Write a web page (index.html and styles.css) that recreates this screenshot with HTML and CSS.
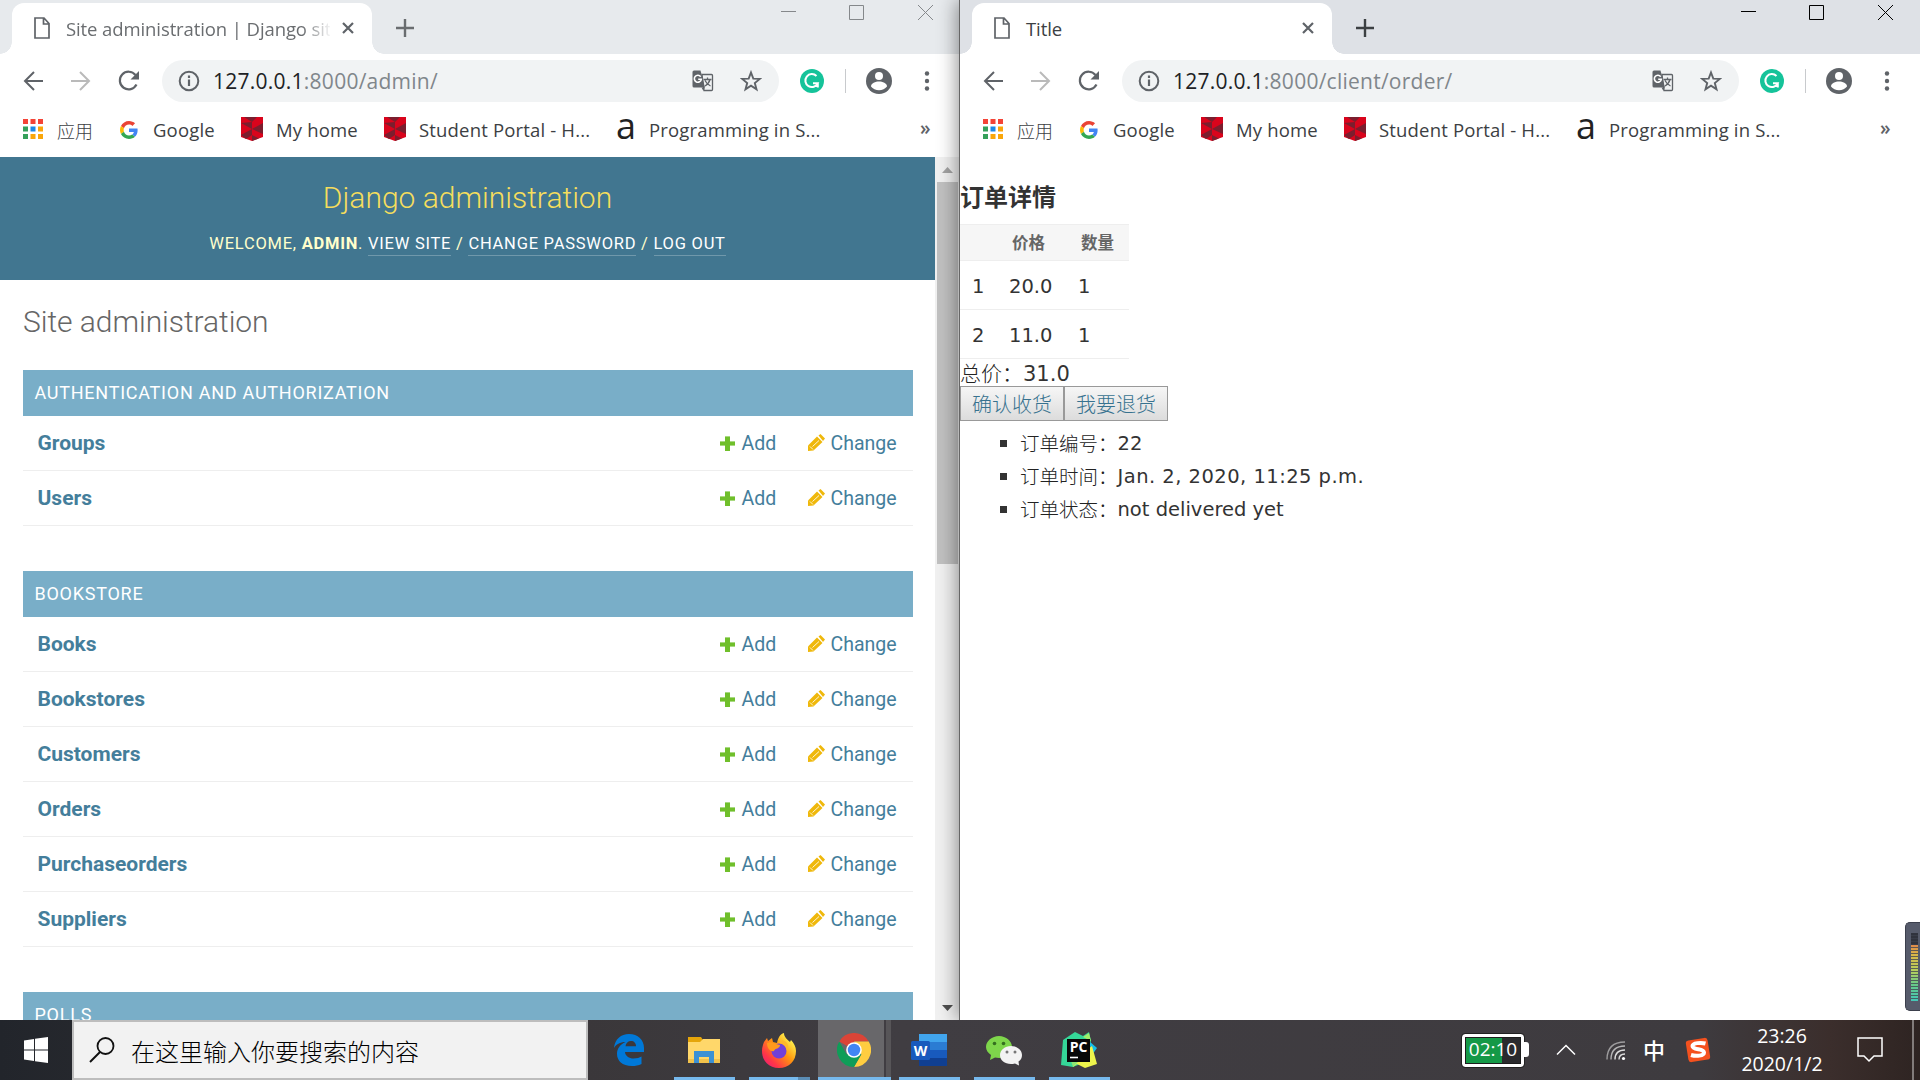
FILE: index.html
```html
<!DOCTYPE html>
<html lang="zh-CN">
<head>
<meta charset="utf-8">
<title>Desktop</title>
<link rel="stylesheet" href="styles.css">
</head>
<body>
<svg class="sprite" width="0" height="0" aria-hidden="true">
  <defs>
    <symbol id="page" viewBox="0 0 16 22"><path d="M1 1h9l5 5.500v14.500H1zM9.500 1v6H15" fill="none" stroke="#5f6368" stroke-width="1.700"/></symbol>
    <symbol id="cross" viewBox="0 0 12 12"><path d="M1 1l10 10M11 1L1 11" fill="none" stroke="currentColor" stroke-width="2.200"/></symbol>
    <symbol id="plus" viewBox="0 0 18 18"><path d="M9 0v18M0 9h18" fill="none" stroke="currentColor" stroke-width="2.400"/></symbol>
    <symbol id="back" viewBox="0 0 20 20"><path d="M20 10H2M11 1L2 10l9 9" fill="none" stroke="currentColor" stroke-width="2"/></symbol>
    <symbol id="reload" viewBox="0 0 22 22"><path d="M18.500 14.500A8.800 8.800 0 1 1 17.500 5" fill="none" stroke="#5f6368" stroke-width="2.200"/><path d="M21 1v8.500h-8.500z" fill="#5f6368"/></symbol>
    <symbol id="info" viewBox="0 0 22 22"><circle cx="11" cy="11" r="9.300" fill="none" stroke="#5f6368" stroke-width="2"/><path d="M11 9.500V16M11 5.500V8" stroke="#5f6368" stroke-width="2.200"/></symbol>
    <symbol id="translate" viewBox="0 0 22 22"><path d="M10 4.500h9.500q1 0 1 1V19.500q0 1-1 1H12z" fill="#f1f3f4" stroke="#5f6368" stroke-width="1.300"/><path d="M2 .5h6.500L13 17.500H2Q.5 17.500.5 16V2Q.5.500 2 .5z" fill="#5f6368"/><path d="M9.500 17.500h3.500l-1.800 3z" fill="#5f6368"/><path d="M8.700 6.700A3.500 3.500 0 1 0 9.300 9.300H6.200" fill="none" stroke="#fff" stroke-width="1.600"/><path d="M11.500 9.500h8M15.500 7.500v2M18 9.500q-1 4-5 6.500M13 10.500q2 4 5.500 5.500" fill="none" stroke="#5f6368" stroke-width="1.300"/></symbol>
    <symbol id="star" viewBox="0 0 22 22"><path d="M11 2.500l2.300 6.100 6.500.3-5 4.100 1.700 6.300L11 15.700l-5.500 3.600 1.700-6.300-5-4.100 6.500-.3z" fill="none" stroke="#5f6368" stroke-width="1.900"/></symbol>
    <symbol id="grammar" viewBox="0 0 24 24"><circle cx="12" cy="12" r="12" fill="#15c39a"/><path d="M16.500 7A6.500 6.500 0 1 0 17.800 14.200H13M17.800 18.500v-4.300" fill="none" stroke="#fff" stroke-width="2"/></symbol>
    <symbol id="user" viewBox="0 0 26 26"><circle cx="13" cy="13" r="13" fill="#5f6368"/><circle cx="13" cy="8" r="4" fill="#fff"/><path d="M5 18.500c0-3.300 4.500-5 8-5s8 1.700 8 5c-1.800 2.300-4.700 3.700-8 3.700s-6.200-1.400-8-3.700z" fill="#fff"/></symbol>
    <symbol id="dots" viewBox="0 0 6 20"><circle cx="3" cy="2.500" r="2.200"/><circle cx="3" cy="10" r="2.200"/><circle cx="3" cy="17.500" r="2.200"/></symbol>
    <symbol id="apps" viewBox="0 0 20 20"><path d="M0 0h5v5H0zM7.500 0h5v5h-5zM15 0h5v5h-5z" fill="#f44336"/><path d="M0 7.500h5v5H0zM0 15h5v5H0z" fill="#34a05a"/><path d="M7.500 7.500h5v5h-5z" fill="#1e88e5"/><path d="M15 7.500h5v5h-5zM7.500 15h5v5h-5zM15 15h5v5h-5z" fill="#f9a60a"/></symbol>
    <symbol id="google" viewBox="0 0 48 48"><path fill="#ea4335" d="M24 9.500c3.540 0 6.710 1.220 9.210 3.600l6.850-6.850C35.900 2.380 30.470 0 24 0 14.620 0 6.510 5.380 2.560 13.220l7.980 6.190C12.430 13.720 17.740 9.500 24 9.500z"/><path fill="#4285f4" d="M46.980 24.550c0-1.570-.15-3.090-.38-4.550H24v9.020h12.940c-.58 2.960-2.260 5.480-4.780 7.180l7.730 6c4.510-4.180 7.090-10.360 7.090-17.650z"/><path fill="#fbbc05" d="M10.530 28.590c-.48-1.450-.76-2.990-.76-4.590s.27-3.140.76-4.590l-7.980-6.190C.92 16.460 0 20.120 0 24c0 3.880.92 7.540 2.560 10.780l7.970-6.190z"/><path fill="#34a853" d="M24 48c6.480 0 11.930-2.130 15.890-5.810l-7.730-6c-2.150 1.450-4.920 2.300-8.160 2.300-6.260 0-11.570-4.220-13.470-9.910l-7.980 6.190C6.510 42.620 14.620 48 24 48z"/></symbol>
    <symbol id="shield" viewBox="0 0 22 24"><path d="M0 0h22v20l-11 4-11-4z" fill="#d9041c"/><path d="M3 0h13l-5 5zM11 5v7L0 6zM22 6v11l-11-5zM0 18l11-6v6l-6 4zM11 18l7 3.500-7 2.500z" fill="#7b1e2e"/></symbol>
    <symbol id="add" viewBox="0 0 15 15"><path d="M5 0h5v5h5v5h-5v5H5v-5H0V5h5z" fill="#70bf2b"/><path d="M5 0h5v1H5zM0 5h5v1H0zM10 5h5v1h-5zM0 9h5v1H0zM10 9h5v1h-5z" fill="#a8d981"/></symbol>
    <symbol id="pencil" viewBox="0 0 17 17"><path d="M0 17v-5.500L9 2.500l5.500 5.500-9 8.500z" fill="#efb80b"/><path d="M10.500 1.500L12.500 0l4.500 4.500-2 2.500z" fill="#efb80b"/><path d="M4.500 12.500L11 6.500M2 12.500l3 3" stroke="#fff6d5" stroke-width="1"/></symbol>
  </defs>
</svg>

<div class="desktop">
  <section class="window inactive">
    <header class="tabs">
      <div class="tab">
        <svg class="i-page"><use href="#page"/></svg>
        <span class="tab-title faded">Site administration | Django sit</span>
        <svg class="i-cross"><use href="#cross"/></svg>
      </div>
      <svg class="i-plus"><use href="#plus"/></svg>
      <svg class="controls" width="152" height="16"><path d="M0 6.500h15M68.500.5h14v14h-14zM137 0l15 15M152 0l-15 15" fill="none" stroke="currentColor"/></svg>
    </header>
    <div class="toolbar">
      <svg class="i-nav"><use href="#back"/></svg>
      <svg class="i-nav forward"><use href="#back"/></svg>
      <svg class="i-reload"><use href="#reload"/></svg>
      <div class="address">
        <svg class="i-22"><use href="#info"/></svg>
        <span class="url"><b>127.0.0.1</b>:8000/admin/</span>
        <svg class="i-22"><use href="#translate"/></svg>
        <svg class="i-22 i-star"><use href="#star"/></svg>
      </div>
      <svg class="i-24"><use href="#grammar"/></svg>
      <i class="divider"></i>
      <svg class="i-26"><use href="#user"/></svg>
      <svg class="i-dots"><use href="#dots"/></svg>
    </div>
    <nav class="bookmarks">
      <span class="mark"><svg class="m-apps"><use href="#apps"/></svg><span class="zh">应用</span></span>
      <span class="mark"><svg class="m-google"><use href="#google"/></svg>Google</span>
      <span class="mark"><svg class="m-shield"><use href="#shield"/></svg>My home</span>
      <span class="mark"><svg class="m-shield"><use href="#shield"/></svg>Student Portal - H...</span>
      <span class="mark"><span class="m-letter">a</span>Programming in S...</span>
      <span class="more">»</span>
    </nav>
    <div class="viewport">
      <main class="admin">
        <header class="branding">
          <h1>Django administration</h1>
          <p>Welcome, <strong>admin</strong>. <a>View site</a> / <a>Change password</a> / <a>Log out</a></p>
        </header>
        <div class="content">
          <h2>Site administration</h2>
          <section class="module">
            <h3>Authentication and Authorization</h3>
            <div class="row"><b>Groups</b><a class="add"><svg><use href="#add"/></svg>Add</a><a class="change"><svg><use href="#pencil"/></svg>Change</a></div>
            <div class="row"><b>Users</b><a class="add"><svg><use href="#add"/></svg>Add</a><a class="change"><svg><use href="#pencil"/></svg>Change</a></div>
          </section>
          <section class="module">
            <h3>Bookstore</h3>
            <div class="row"><b>Books</b><a class="add"><svg><use href="#add"/></svg>Add</a><a class="change"><svg><use href="#pencil"/></svg>Change</a></div>
            <div class="row"><b>Bookstores</b><a class="add"><svg><use href="#add"/></svg>Add</a><a class="change"><svg><use href="#pencil"/></svg>Change</a></div>
            <div class="row"><b>Customers</b><a class="add"><svg><use href="#add"/></svg>Add</a><a class="change"><svg><use href="#pencil"/></svg>Change</a></div>
            <div class="row"><b>Orders</b><a class="add"><svg><use href="#add"/></svg>Add</a><a class="change"><svg><use href="#pencil"/></svg>Change</a></div>
            <div class="row"><b>Purchaseorders</b><a class="add"><svg><use href="#add"/></svg>Add</a><a class="change"><svg><use href="#pencil"/></svg>Change</a></div>
            <div class="row"><b>Suppliers</b><a class="add"><svg><use href="#add"/></svg>Add</a><a class="change"><svg><use href="#pencil"/></svg>Change</a></div>
          </section>
          <section class="module">
            <h3>Polls</h3>
          </section>
        </div>
      </main>
      <aside class="scrollbar">
        <svg width="11" height="6"><path d="M5.500 0L11 6H0z" fill="#a3a3a3"/></svg>
        <i class="thumb"></i>
        <svg class="down" width="11" height="6"><path d="M0 0h11L5.500 6z" fill="#505050"/></svg>
      </aside>
    </div>
  </section>

  <section class="window active">
    <header class="tabs">
      <div class="tab">
        <svg class="i-page"><use href="#page"/></svg>
        <span class="tab-title">Title</span>
        <svg class="i-cross"><use href="#cross"/></svg>
      </div>
      <svg class="i-plus"><use href="#plus"/></svg>
      <svg class="controls" width="152" height="16"><path d="M0 6.500h15M68.500.5h14v14h-14zM137 0l15 15M152 0l-15 15" fill="none" stroke="currentColor"/></svg>
    </header>
    <div class="toolbar">
      <svg class="i-nav"><use href="#back"/></svg>
      <svg class="i-nav forward"><use href="#back"/></svg>
      <svg class="i-reload"><use href="#reload"/></svg>
      <div class="address">
        <svg class="i-22"><use href="#info"/></svg>
        <span class="url"><b>127.0.0.1</b>:8000/client/order/</span>
        <svg class="i-22"><use href="#translate"/></svg>
        <svg class="i-22 i-star"><use href="#star"/></svg>
      </div>
      <svg class="i-24"><use href="#grammar"/></svg>
      <i class="divider"></i>
      <svg class="i-26"><use href="#user"/></svg>
      <svg class="i-dots"><use href="#dots"/></svg>
    </div>
    <nav class="bookmarks">
      <span class="mark"><svg class="m-apps"><use href="#apps"/></svg><span class="zh">应用</span></span>
      <span class="mark"><svg class="m-google"><use href="#google"/></svg>Google</span>
      <span class="mark"><svg class="m-shield"><use href="#shield"/></svg>My home</span>
      <span class="mark"><svg class="m-shield"><use href="#shield"/></svg>Student Portal - H...</span>
      <span class="mark"><span class="m-letter">a</span>Programming in S...</span>
      <span class="more">»</span>
    </nav>
    <main class="order">
      <h2>订单详情</h2>
      <table>
        <thead><tr><th></th><th>价格</th><th>数量</th></tr></thead>
        <tbody>
          <tr><td>1</td><td>20.0</td><td>1</td></tr>
          <tr><td>2</td><td>11.0</td><td>1</td></tr>
        </tbody>
      </table>
      <p class="total"><span class="label">总价：</span>31.0</p>
      <div class="actions"><button>确认收货</button><button>我要退货</button></div>
      <ul>
        <li><span class="label">订单编号：</span>22</li>
        <li><span class="label">订单时间：</span><time>Jan. 2, 2020, 11:25 p.m.</time></li>
        <li><span class="label">订单状态：</span>not delivered yet</li>
      </ul>
    </main>
  </section>

  <footer class="taskbar">
    <div class="start"><svg width="24" height="26" viewBox="0 0 24 26"><path d="M0 3.500L10 2v10.500H0zM11 1.800L24 0v12.500H11zM0 13.500h10V24L0 22.500zM11 13.500h13V26l-13-1.800z" fill="#fff"/></svg></div>
    <div class="search">
      <svg width="26" height="26" viewBox="0 0 26 26"><circle cx="16.500" cy="9" r="8" fill="none" stroke="#111" stroke-width="1.800"/><path d="M11 15L1 25" stroke="#111" stroke-width="2"/></svg>
      <span>在这里输入你要搜索的内容</span>
    </div>
    <div class="apps">
      <div class="app"><svg width="36" height="36" viewBox="0 0 36 36"><path d="M3 16C4 7 10 2 18 2c9 0 15 6 15 14v4H14c.3 4 4 6.500 8.500 6.500 3.500 0 6-.8 8-2V32c-3 1.500-6 2-9.500 2C11 34 6 28.500 6 22c0-5.500 3-9.500 8.500-12C9 10 5 12.500 3 16zm11.500-1.800h10.500C25 11 23 9 20 9s-5 2-5.500 5.200z" fill="#0078d7"/></svg></div>
      <div class="app open"><svg width="36" height="36" viewBox="0 0 36 36"><path d="M2 5h13l2 3-2 3H2z" fill="#e5a50a"/><path d="M2 10h12l3-3h17v23H2z" fill="#ffd76a"/><path d="M2 27h32v4H2z" fill="#f2c24b"/><path d="M8 19h20v12h-5v-6H13v6H8z" fill="#3c91d4"/></svg></div>
      <div class="app open stacked"><svg width="36" height="36" viewBox="0 0 36 36"><defs><linearGradient id="ff" x1="1" y1="0" x2="0" y2="1"><stop offset=".15" stop-color="#fff44f"/><stop offset=".45" stop-color="#ff980e"/><stop offset=".75" stop-color="#ff3647"/><stop offset="1" stop-color="#e31587"/></linearGradient></defs><path d="M3 10l3-4 1 3 4-3 1 4 4 1c1-5 3-9 7-10 0 4 3 6 6 9l1-2c3 3 5 7 5 11 0 10-7 17-17 17S1 29 1 19c0-4 1-6 2-9z" fill="url(#ff)"/><circle cx="18" cy="19" r="7.500" fill="#7140d8"/><path d="M6 11c4-2 6 0 9 1l4 1c0 4-5 3-6 6-3 1-7-2-7-8z" fill="#ff9a1c"/><path d="M18 11c5 0 8 4 8 8 3-5 0-10-5-11z" fill="#ffb72a"/></svg></div>
      <div class="app open current"><svg width="34" height="34" viewBox="0 0 48 48"><path d="M24 24L3.200 12A24 24 0 0 1 44.800 12H24z" fill="#db4437"/><path d="M44.800 12A24 24 0 0 1 24 48L34.400 30 24 12z" fill="#ffcd40"/><path d="M3.200 12A24 24 0 0 0 24 48l10.400-18H13.600z" fill="#0f9d58"/><circle cx="24" cy="24" r="11" fill="#fff"/><circle cx="24" cy="24" r="8.800" fill="#4285f4"/></svg></div>
      <div class="app open"><svg width="36" height="36" viewBox="0 0 36 36"><path d="M8 2h28v8.500H8z" fill="#41a5ee"/><path d="M8 10h28v8.500H8z" fill="#2b7cd3"/><path d="M8 18h28v8H8z" fill="#185abd"/><path d="M8 26h28v8H8z" fill="#103f91"/><rect y="9" width="19" height="19" rx="1.500" fill="#185abd"/><text x="9.500" y="24" class="word-letter">W</text></svg></div>
      <div class="app open"><svg width="38" height="36" viewBox="0 0 38 36"><path d="M14 4c7 0 13 5 13 11s-6 11-13 11l-4-.5L5 28l1-5c-3-2-5-5-5-8C1 9 7 4 14 4z" fill="#7ed64b"/><path d="M26 14c6 0 11 4 11 9 0 3-1 5-3.500 6.500l.5 4-4-2c-8 2-15-2-15-8.500 0-5 5-9 11-9z" fill="#f3f3f3"/><circle cx="9.500" cy="11.500" r="1.800" fill="#356f20"/><circle cx="18.500" cy="11.500" r="1.800" fill="#356f20"/><circle cx="22" cy="20" r="1.500" fill="#777"/><circle cx="30" cy="20" r="1.500" fill="#777"/></svg></div>
      <div class="app open"><svg width="36" height="36" viewBox="0 0 36 36"><path d="M2 8l12-8 8 4 6-4 2 9-8 22-10 4L0 33z" fill="#35d798"/><path d="M22 5l6-4 2 8z" fill="#a2ee6a"/><path d="M28 9l8 7-5 7z" fill="#15bde8"/><path d="M31 14l5 18-12 4-8-4-4 3 2-8z" fill="#eef44c"/><path d="M10 29h8l-6 6z" fill="#8be675"/><rect x="6" y="7" width="23" height="23" fill="#080808"/><text x="17.500" y="20" class="pc-letters">PC</text><path d="M9 25.500h8" stroke="#fff" stroke-width="1.600"/></svg></div>
    </div>
    <div class="tray">
      <div class="battery"><span>02:10</span></div>
      <svg class="caret" width="20" height="12"><path d="M1 10.500L10 1.500l9 9" fill="none" stroke="#fff" stroke-width="1.500"/></svg>
      <svg class="wifi" width="20" height="20"><g fill="none" stroke="#ddd" stroke-width="1.400"><path d="M13 18.500q0-5.500 6-5.500"/><path d="M9 18.500q0-9.500 10-9.500"/><path d="M5 18.500Q5 5 19 5" opacity=".75"/><path d="M1 18.500Q1 1 19 1" opacity=".6"/></g><circle cx="17.500" cy="17.500" r="1.600" fill="#fff"/></svg>
      <span class="ime">中</span>
      <svg class="sogou" width="26" height="26" viewBox="0 0 26 26"><rect x="2" y="2" width="22" height="22" rx="3" fill="#f4511e" transform="rotate(-9 13 13)"/><path d="M20.500 6.500c-4-1-13-.8-13 2.500 0 4.500 11.500 2 11.500 6.500 0 3.500-8 4-13 2.500" fill="none" stroke="#fff" stroke-width="4"/></svg>
      <div class="clock"><span>23:26</span><span>2020/1/2</span></div>
      <svg class="notice" width="26" height="26"><path d="M1 1h24v18h-8l-5 5-5-5H1z" fill="none" stroke="#fff" stroke-width="1.500"/></svg>
      <i class="peek"></i>
    </div>
  </footer>

  <aside class="gauge"><i></i></aside>
</div>
</body>
</html>
```
FILE: styles.css
```css
* { box-sizing: border-box; }

body {
  margin: 0;
  overflow: hidden;
  font-family: "Open Sans", "Noto Sans CJK SC", sans-serif;
}

svg, i { display: block; flex: none; }
.sprite { position: absolute; }
h1, h2, h3, p, ul { margin: 0; }

.desktop {
  position: relative;
  display: grid;
  grid-template: 1020px 60px / 960px 960px;
  width: 1920px;
  height: 1080px;
  overflow: hidden;
}

/* Browser windows */
.window {
  display: flex;
  flex-direction: column;
  height: 1020px;
  overflow: hidden;
  background: #fff;
}
.active {
  z-index: 1;
  box-shadow: -1px 0 0 #666, -3px 0 18px rgba(0, 0, 0, .42);
}

.tabs {
  display: flex;
  align-items: flex-start;
  flex: none;
  height: 54px;
  padding: 3px 0 0 12px;
  background: #dee1e6;
  color: #3c4043;
}
.inactive .tabs { background: #e7eaed; color: #6a6d70; }
.tab {
  position: relative;
  display: flex;
  align-items: center;
  width: 360px;
  height: 51px;
  padding: 0 18px 2px 22px;
  border-radius: 12px 12px 0 0;
  background: #fff;
}
.tab::before, .tab::after {
  content: "";
  position: absolute;
  bottom: 0;
  width: 12px;
  height: 12px;
}
.tab::before { left: -12px; background: radial-gradient(circle at 0 0, transparent 11.500px, #fff 12px); }
.tab::after { right: -12px; background: radial-gradient(circle at 100% 0, transparent 11.500px, #fff 12px); }
.tab-title {
  width: 264px;
  margin: 2px 12px 0 16px;
  white-space: nowrap;
  font-size: 18.500px;
  letter-spacing: -.1px;
}
.faded { -webkit-mask-image: linear-gradient(90deg, #000 236px, transparent 266px); mask-image: linear-gradient(90deg, #000 236px, transparent 266px); }
.i-page { width: 16px; height: 22px; }
.i-cross { width: 12px; height: 12px; color: #5f6368; }
.i-plus { width: 18px; height: 18px; margin: 16px 0 0 24px; }
.controls { margin: 2px 27px 0 auto; color: #000; }
.inactive .controls { color: #85888b; }

.toolbar {
  display: flex;
  align-items: center;
  flex: none;
  height: 54px;
  padding: 0 30px 0 23px;
  color: #5f6368;
}
.i-nav { width: 20px; height: 20px; margin-right: 28px; }
.forward { color: #bababa; transform: scaleX(-1); }
.i-reload { width: 22px; height: 22px; margin: 0 22px 0 -1px; }
.address {
  display: flex;
  align-items: center;
  width: 617px;
  height: 42px;
  padding: 0 17px 0 16px;
  border-radius: 21px;
  background: #f1f3f4;
}
.url { flex: 1; margin-left: 13px; font-size: 21px; letter-spacing: .25px; color: #80868b; white-space: nowrap; }
.url b { font-weight: 400; color: #202124; }
.i-22 { width: 22px; height: 22px; }
.i-star { margin-left: 26px; }
.i-24 { width: 24px; height: 24px; margin-left: 21px; }
.divider { width: 1px; height: 24px; margin: 0 20px 0 21px; background: #c8cacd; }
.i-26 { width: 26px; height: 26px; }
.i-dots { width: 6px; height: 20px; margin-left: auto; fill: #5f6368; }

.bookmarks {
  display: grid;
  grid-template-columns: 97px 121px 143px 233px 1fr 10px;
  align-items: center;
  flex: none;
  height: 49px;
  padding: 0 30px 6px 23px;
  font-size: 18.500px;
  letter-spacing: .17px;
  color: #3c4043;
  white-space: nowrap;
}
.mark { display: flex; align-items: center; height: 43px; }
.zh { font-family: "Noto Sans CJK SC", sans-serif; font-weight: 300; font-size: 18px; letter-spacing: 0; }
.m-apps { width: 20px; height: 20px; margin: -2px 14px 0 0; }
.m-google { width: 18px; height: 18px; margin-right: 15px; }
.m-shield { width: 22px; height: 24px; margin: -2px 13px 0 0; }
.m-letter { width: 32px; font: 36px/36px "Open Sans", sans-serif; color: #222; transform: translate(-1px, -4px); }
.more { font-size: 19px; font-weight: 600; line-height: 26px; color: #5f6368; transform: translateY(-2px); }

/* Django admin page */
.viewport { display: flex; flex: 1; min-height: 0; overflow: hidden; }
.admin { width: 935px; overflow: hidden; font-family: Roboto, sans-serif; }
.branding {
  height: 123px;
  padding-top: 22px;
  background: #417690;
  color: #ffc;
  text-align: center;
}
.branding h1 { font-size: 30px; font-weight: 300; line-height: 38px; color: #f5dd5d; }
.branding p { margin-top: 14px; font-size: 16.500px; line-height: 26px; letter-spacing: .75px; text-transform: uppercase; }
.branding a { color: #fff; border-bottom: 1px solid #7098ab; padding-bottom: 2px; }
.content { padding: 0 22px 0 23px; }
.content h2 { height: 90px; padding-top: 24px; font-size: 30px; font-weight: 300; line-height: 36px; letter-spacing: -.05px; color: #666; }
.module { margin-bottom: 45px; }
.module h3 {
  height: 46px;
  padding-left: 11.500px;
  background: #79aec8;
  color: #fff;
  font-size: 18px;
  font-weight: 400;
  line-height: 46px;
  letter-spacing: .75px;
  text-transform: uppercase;
}
.row {
  display: grid;
  grid-template-columns: 682px 87px 1fr;
  align-items: center;
  height: 55px;
  padding-left: 14.500px;
  border-bottom: 1px solid #eee;
  font-size: 19.500px;
  color: #447e9b;
}
.row b { font-size: 21px; line-height: 24px; }
.row a { display: flex; align-items: center; }
.add svg { width: 15px; height: 15px; margin-right: 7px; }
.change svg { width: 17px; height: 17px; margin: -1px 6px 0 1px; }

.scrollbar {
  display: flex;
  flex-direction: column;
  align-items: center;
  width: 24px;
  padding: 10px 0 9px;
  background: #f1f1f1;
}
.thumb { width: 21px; height: 382px; margin-top: 9px; background: #c1c1c1; }
.down { margin-top: auto; }

/* Order page */
.order {
  padding-top: 20px;
  font-family: "DejaVu Sans", "Noto Sans CJK SC", sans-serif;
  font-size: 19.500px;
  color: #333;
}
.order h2 { height: 47px; font: bold 24px/38px "Noto Sans CJK SC", sans-serif; }
.order table { width: 169px; border-collapse: separate; border-spacing: 0; table-layout: fixed; }
.order th {
  height: 37px;
  padding: 0 12px 1px;
  border: solid #eee;
  border-width: 1px 0;
  background: #f6f6f6;
  color: #666;
  font: bold 16.500px/20px "Noto Sans CJK SC", sans-serif;
  text-align: left;
}
.order td { height: 49px; padding: 2px 12px 0; border-bottom: 1px solid #eee; }
.order th:first-child { width: 37px; }
.order th:nth-child(2) { width: 70px; padding-left: 15px; }
.order th:nth-child(3) { padding-left: 14px; }
.order td:nth-child(3) { padding-left: 11px; }
.label { font-family: "Noto Sans CJK SC", sans-serif; font-weight: 300; color: #222; }
.total { height: 27px; font-size: 21px; line-height: 26px; }
.actions { display: flex; }
.actions button {
  width: 104px;
  height: 35px;
  padding: 0;
  border: 1px solid #999;
  background: linear-gradient(#f6f6f6, #dcdcdc);
  color: #37728f;
  font: 300 20px/30px "Noto Sans CJK SC", sans-serif;
}
.order ul { padding: 6px 0 0 59px; list-style: none; line-height: 33px; }
.order li { display: flex; align-items: center; height: 33px; white-space: nowrap; }
.order li .label { margin-top: -3px; }
.order li::before { content: ""; width: 7px; height: 7px; margin: 0 13px 0 -19px; background: #333; }
.order time { letter-spacing: .47px; }

/* Taskbar */
.taskbar {
  grid-column: 1 / 3;
  z-index: 2;
  display: flex;
  background: linear-gradient(90deg, #22252b 0, #3a373a 588px, #403d42 900px, #3e3b3f 1700px, #3b2e2c 1830px, #2e2422 1920px);
  color: #fff;
}
.start { display: flex; align-items: center; justify-content: center; width: 72px; }
.search {
  display: flex;
  align-items: center;
  gap: 16px;
  width: 516px;
  padding: 0 0 0 15px;
  border: 2px solid #bdbdbd;
  background: #f2f2f2;
  color: #000;
  font: 300 24px/30px "Noto Sans CJK SC", sans-serif;
}
.search span { margin-top: 1px; }
.apps { display: flex; padding-left: 11px; gap: 14px; }
.app {
  display: flex;
  align-items: center;
  justify-content: center;
  width: 61px;
  border-bottom: 3px solid transparent;
  padding: 3px 1px 0 0;
}
.open { border-color: #76b9ed; }
.stacked { border-image: linear-gradient(90deg, #76b9ed 47px, #5b8db5 47px) 3; }
.current {
  width: 73px;
  margin: 0 -6px;
  padding-right: 2px;
  background: linear-gradient(90deg, #68676a 66px, #403d42 66px 68px, #575558 68px);
}
.word-letter, .pc-letters { font: bold 14px "Open Sans", sans-serif; fill: #fff; text-anchor: middle; }
.tray { display: flex; align-items: center; margin-left: auto; }
.battery {
  position: relative;
  width: 62px;
  height: 33px;
  border: 3px solid #fff;
  border-radius: 3px;
  background: linear-gradient(90deg, #159947 37px, #2b2b2e 37px);
  font-size: 19px;
  line-height: 25px;
  text-align: center;
  outline: 1px solid #222;
  box-shadow: inset 0 0 0 1px #1d1d1d;
}
.battery::after {
  content: "";
  position: absolute;
  top: 5px;
  right: -8px;
  width: 5px;
  height: 15px;
  border-radius: 0 3px 3px 0;
  background: #fff;
}
.caret { margin-left: 32px; }
.wifi { margin: 2px 0 0 30px; }
.ime { width: 24px; margin: -3px 0 0 17px; font: 500 22px/30px "Noto Sans CJK SC", sans-serif; }
.sogou { margin-left: 18px; }
.clock { display: flex; flex-direction: column; width: 100px; margin-left: 21px; font-size: 19.500px; line-height: 28px; text-align: center; }
.notice { margin-left: 25px; }
.peek { width: 2px; height: 60px; margin: 0 6px 0 29px; background: #827c7b; }

/* Level meter docked over the right screen edge */
.gauge {
  position: absolute;
  z-index: 3;
  right: 0;
  top: 922px;
  width: 15px;
  height: 89px;
  padding: 10px 0 0 5px;
  border: 1px solid #3b3f4c;
  border-right: 0;
  border-radius: 5px 0 0 5px;
  background: #565b6b;
}
.gauge i {
  width: 7px;
  height: 68px;
  background:
    repeating-linear-gradient(transparent 0 2px, rgba(60, 64, 76, .75) 2px 3px),
    linear-gradient(#30333d 12px, #e08a4a 12px, #d9b848 22px, #b5cf5e 38px, #66c98a 52px, #45c7b8);
}
```
